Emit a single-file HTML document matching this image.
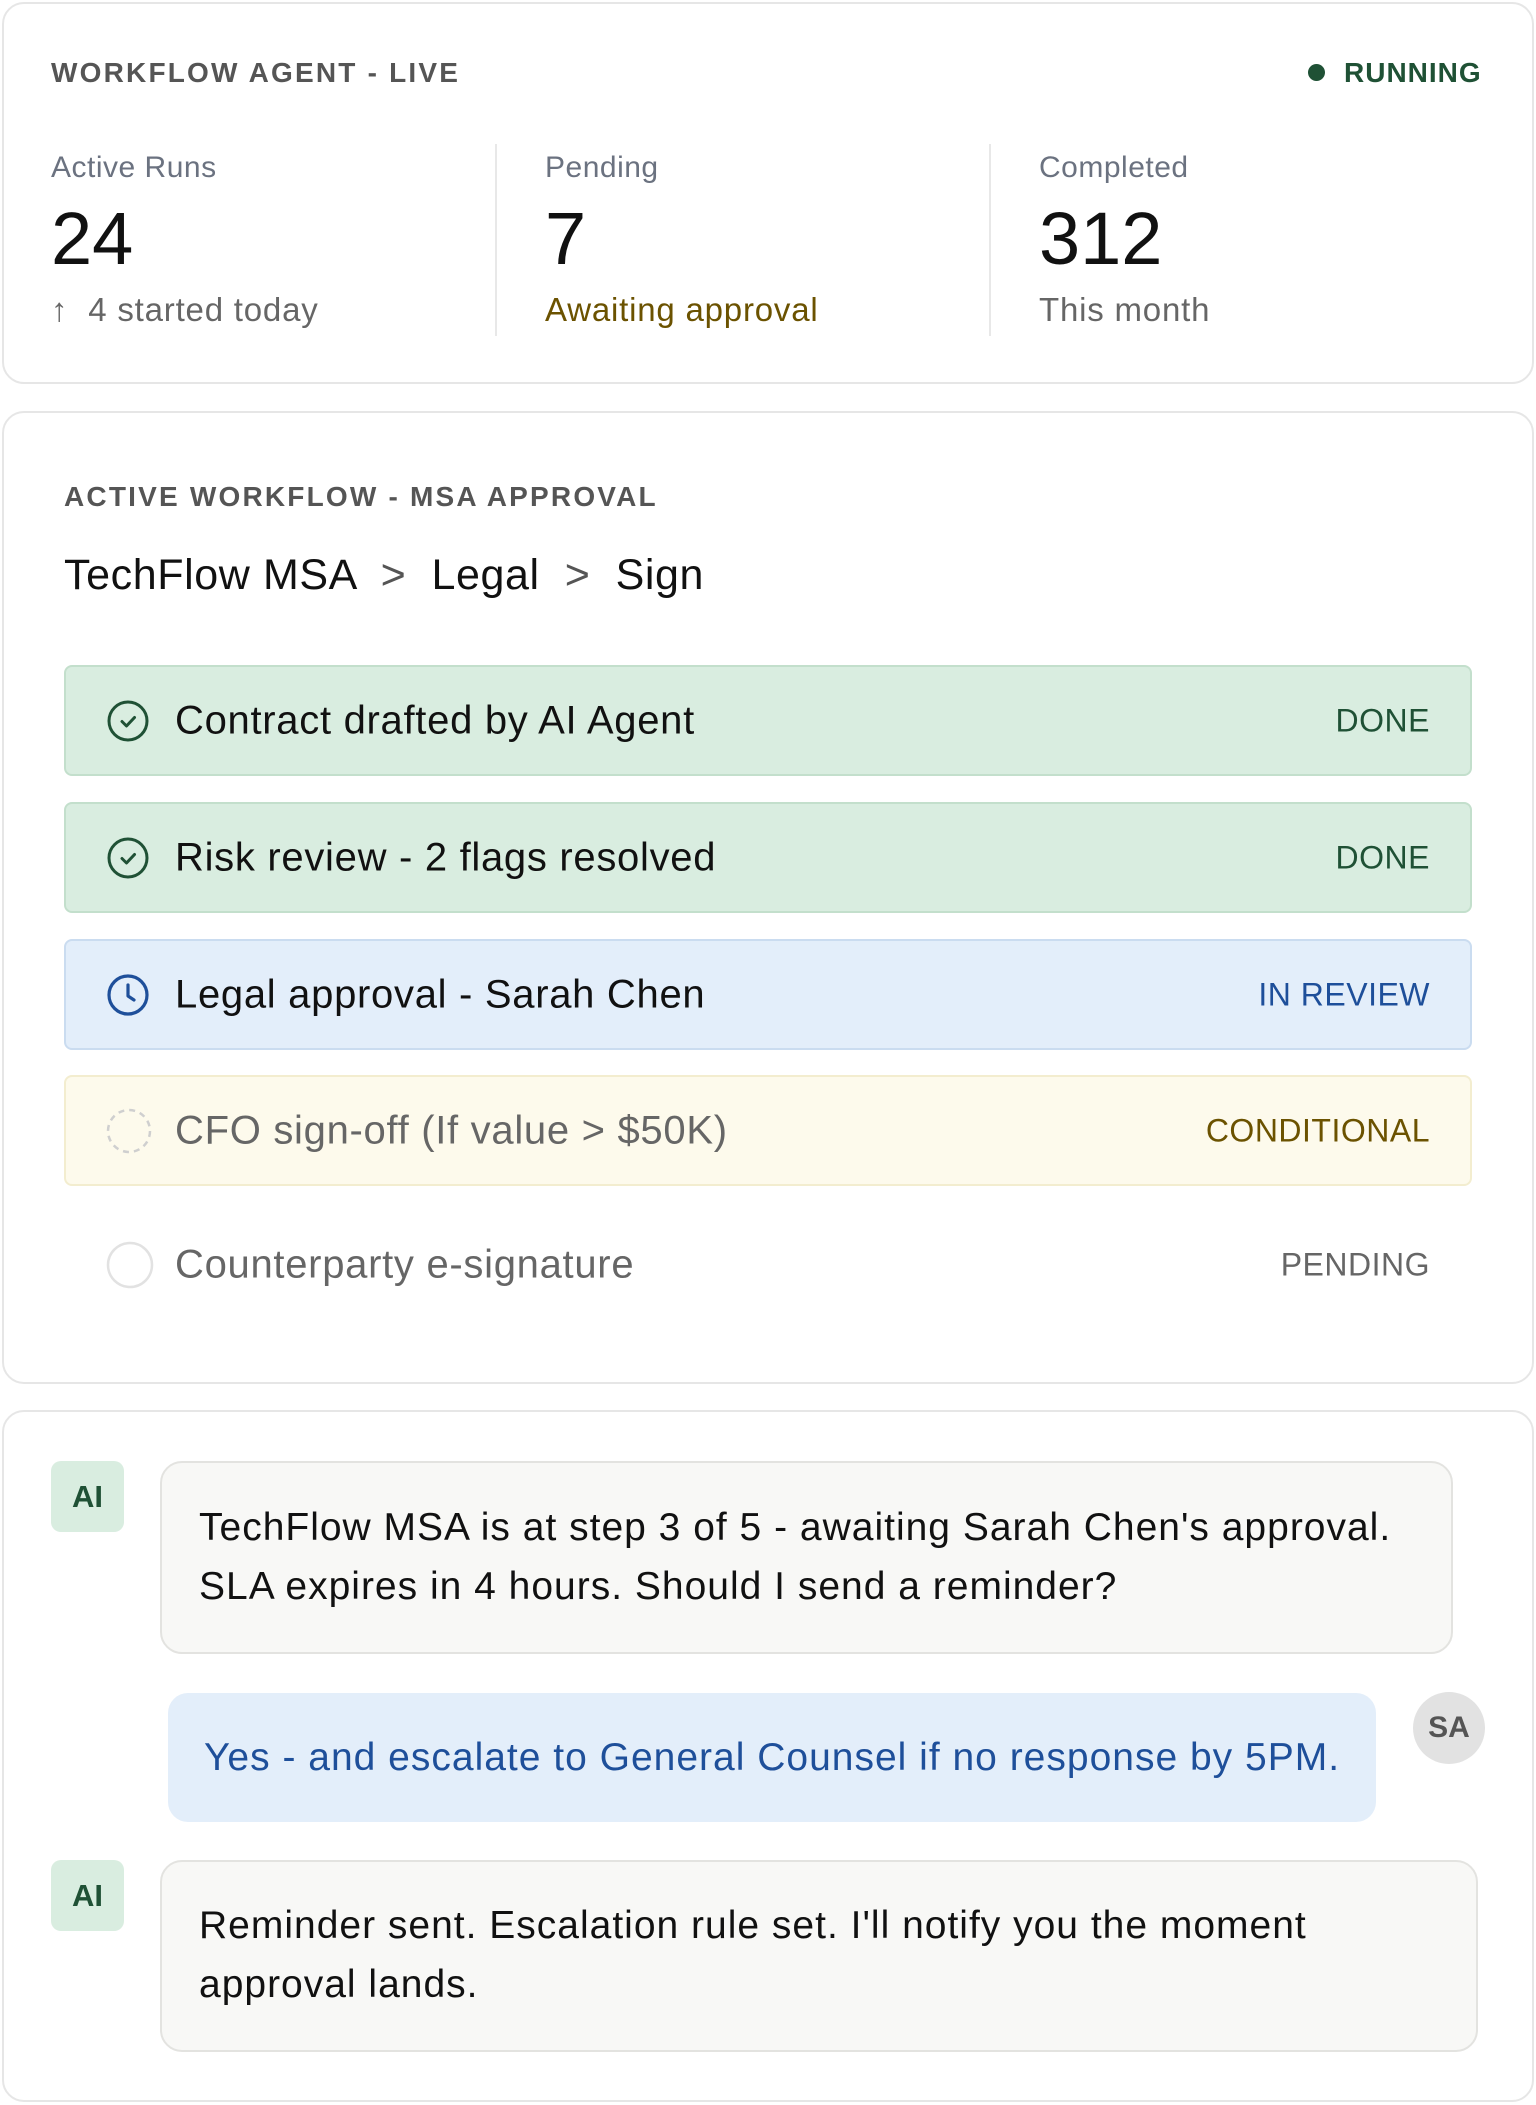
<!DOCTYPE html>
<html><head><meta charset="utf-8"><style>
*{margin:0;padding:0;box-sizing:border-box}
body{width:1536px;height:2105px;background:#fff;font-family:"Liberation Sans",sans-serif;position:relative;overflow:hidden;color:#111}
.a{position:absolute;white-space:nowrap}
.card{position:absolute;left:2px;width:1532px;border:2px solid #e6e6e6;border-radius:22px;background:#fff}
.cap{font-size:28px;letter-spacing:2.2px;color:#555;font-weight:bold}
.lbl{font-size:30px;letter-spacing:.5px;color:#6b7280}
.num{font-size:74px;color:#111}
.sub{font-size:33px;letter-spacing:.8px}
.div{position:absolute;width:2px;background:#e8e8e8;top:144px;height:192px}
.row{position:absolute;left:64px;width:1408px;height:111px;border-radius:8px;border:2px solid}
.row .t{position:absolute;left:109px;top:50%;transform:translateY(-50%);font-size:40px;letter-spacing:.7px;white-space:nowrap}
.row .s{position:absolute;right:40px;top:50%;transform:translateY(-50%);font-size:32px;letter-spacing:.5px;white-space:nowrap}
.row svg{position:absolute;left:40px;top:50%;transform:translateY(-50%)}
.g{background:#d9ede0;border-color:#c3dfcc}.g .s{color:#1f5135}
.b{background:#e3eefa;border-color:#cadcf0}.b .s{color:#1e4f9a}
.y{background:#fdfaec;border-color:#f3edcf}.y .s{color:#6b5200}.y .t{color:#666}
.n{border-color:transparent}.n .t{color:#666}.n .s{color:#666}
.ai{position:absolute;left:51px;width:73px;height:71px;border-radius:10px;background:#d9ede0;color:#1f5135;font-weight:bold;font-size:31px;text-align:center;line-height:71px}
.bub{position:absolute;border-radius:22px;border:2px solid #e3e3e0;background:#f8f8f6;font-size:39px;letter-spacing:1px;line-height:59px;padding-left:37px;white-space:nowrap}
</style></head><body>
<div class="card" style="top:2px;height:382px"></div>
<div class="a cap" style="left:51px;top:57px">WORKFLOW AGENT - LIVE</div>
<div class="a" style="left:1308px;top:64px;width:17px;height:17px;border-radius:50%;background:#1f5135"></div>
<div class="a cap" style="left:1344px;top:57px;color:#1f5135;letter-spacing:1px">RUNNING</div>
<div class="a lbl" style="left:51px;top:151px">Active Runs</div>
<div class="a num" style="left:51px;top:196px">24</div>
<div class="a sub" style="left:51px;top:291px;color:#666">↑&nbsp; 4 started today</div>
<div class="div" style="left:495px"></div>
<div class="a lbl" style="left:545px;top:151px">Pending</div>
<div class="a num" style="left:545px;top:196px">7</div>
<div class="a sub" style="left:545px;top:291px;color:#6b5200">Awaiting approval</div>
<div class="div" style="left:989px"></div>
<div class="a lbl" style="left:1039px;top:151px">Completed</div>
<div class="a num" style="left:1039px;top:196px">312</div>
<div class="a sub" style="left:1039px;top:291px;color:#666">This month</div>

<div class="card" style="top:411px;height:973px"></div>
<div class="a cap" style="left:64px;top:481px">ACTIVE WORKFLOW - MSA APPROVAL</div>
<div class="a" style="left:64px;top:551px;font-size:43px;letter-spacing:.6px">TechFlow MSA &nbsp;<span style="color:#555">&gt;</span>&nbsp; Legal &nbsp;<span style="color:#555">&gt;</span>&nbsp; Sign</div>

<div class="row g" style="top:665px"><svg width="44" height="44" viewBox="0 0 44 44"><circle cx="22" cy="22" r="19" fill="none" stroke="#1f5135" stroke-width="3"/><path d="M16 22.5l4.5 4.5 8-8.5" fill="none" stroke="#1f5135" stroke-width="3" stroke-linecap="round" stroke-linejoin="round"/></svg><div class="t">Contract drafted by AI Agent</div><div class="s">DONE</div></div>
<div class="row g" style="top:802px"><svg width="44" height="44" viewBox="0 0 44 44"><circle cx="22" cy="22" r="19" fill="none" stroke="#1f5135" stroke-width="3"/><path d="M16 22.5l4.5 4.5 8-8.5" fill="none" stroke="#1f5135" stroke-width="3" stroke-linecap="round" stroke-linejoin="round"/></svg><div class="t">Risk review - 2 flags resolved</div><div class="s">DONE</div></div>
<div class="row b" style="top:939px"><svg width="44" height="44" viewBox="0 0 44 44"><circle cx="22" cy="22" r="19" fill="none" stroke="#1e4f9a" stroke-width="3.2"/><path d="M22 12v11l6 4" fill="none" stroke="#1e4f9a" stroke-width="3.2" stroke-linecap="round" stroke-linejoin="round"/></svg><div class="t">Legal approval - Sarah Chen</div><div class="s">IN REVIEW</div></div>
<div class="row y" style="top:1075px"><svg width="46" height="46" viewBox="0 0 46 46"><circle cx="23" cy="23" r="21" fill="none" stroke="#cfcfcf" stroke-width="2.5" stroke-dasharray="6 5"/></svg><div class="t">CFO sign-off (If value &gt; $50K)</div><div class="s">CONDITIONAL</div></div>
<div class="row n" style="top:1209px"><svg width="48" height="48" viewBox="0 0 48 48"><circle cx="24" cy="24" r="22" fill="none" stroke="#e2e2e2" stroke-width="2.5"/></svg><div class="t">Counterparty e-signature</div><div class="s">PENDING</div></div>

<div class="card" style="top:1410px;height:692px"></div>
<div class="ai" style="top:1461px">AI</div>
<div class="bub" style="left:160px;top:1461px;width:1293px;height:193px;padding-top:35px">TechFlow MSA is at step 3 of 5 - awaiting Sarah Chen's approval.<br>SLA expires in 4 hours. Should I send a reminder?</div>
<div class="a" style="left:168px;top:1693px;width:1208px;height:129px;border-radius:20px;background:#e3eefa;color:#1e4f9a;font-size:39px;letter-spacing:1px;padding-left:36px;line-height:129px">Yes - and escalate to General Counsel if no response by 5PM.</div>
<div class="a" style="left:1413px;top:1692px;width:72px;height:72px;border-radius:50%;background:#e2e2e2;color:#555;font-weight:bold;font-size:30px;text-align:center;line-height:72px">SA</div>
<div class="ai" style="top:1860px">AI</div>
<div class="bub" style="left:160px;top:1860px;width:1318px;height:192px;padding-top:34px">Reminder sent. Escalation rule set. I'll notify you the moment<br>approval lands.</div>
</body></html>
